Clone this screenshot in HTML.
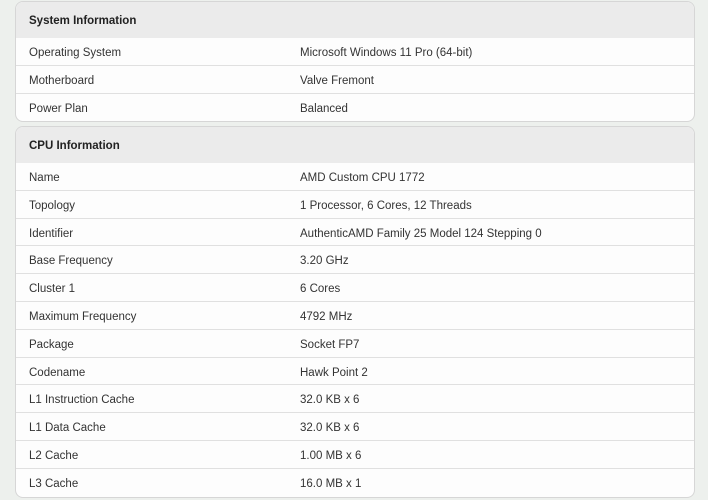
<!DOCTYPE html><html><head><style>
body{margin:0;background:#edf0ed;font-family:"Liberation Sans",Arial,sans-serif;width:708px;height:500px;overflow:hidden}
.card{position:absolute;left:15px;width:678px;border:1px solid #d6d6d6;border-radius:8px;overflow:hidden;background:#fdfdfd}
.h{height:36px;line-height:38px;background:#ebebeb;padding-left:13px;font-weight:bold;font-size:11.5px;color:#222}
.r{height:26.8px;line-height:30px;border-top:1px solid #e0e0e0;font-size:11.5px;color:#333;position:relative;padding-left:13px;overflow:hidden}
.r span{position:absolute;left:284px}
</style></head><body>
<div class="card" style="top:1px;height:119px">
<div class="h">System Information</div>
<div class="r" style="border-top:0">Operating System<span>Microsoft Windows 11 Pro (64-bit)</span></div>
<div class="r">Motherboard<span>Valve Fremont</span></div>
<div class="r">Power Plan<span>Balanced</span></div>
</div>
<div class="card" style="top:126px;height:370px">
<div class="h">CPU Information</div>
<div class="r" style="border-top:0">Name<span>AMD Custom CPU 1772</span></div>
<div class="r">Topology<span>1 Processor, 6 Cores, 12 Threads</span></div>
<div class="r">Identifier<span>AuthenticAMD Family 25 Model 124 Stepping 0</span></div>
<div class="r">Base Frequency<span>3.20 GHz</span></div>
<div class="r">Cluster 1<span>6 Cores</span></div>
<div class="r">Maximum Frequency<span>4792 MHz</span></div>
<div class="r">Package<span>Socket FP7</span></div>
<div class="r">Codename<span>Hawk Point 2</span></div>
<div class="r">L1 Instruction Cache<span>32.0 KB x 6</span></div>
<div class="r">L1 Data Cache<span>32.0 KB x 6</span></div>
<div class="r">L2 Cache<span>1.00 MB x 6</span></div>
<div class="r">L3 Cache<span>16.0 MB x 1</span></div>
</div>
</body></html>
